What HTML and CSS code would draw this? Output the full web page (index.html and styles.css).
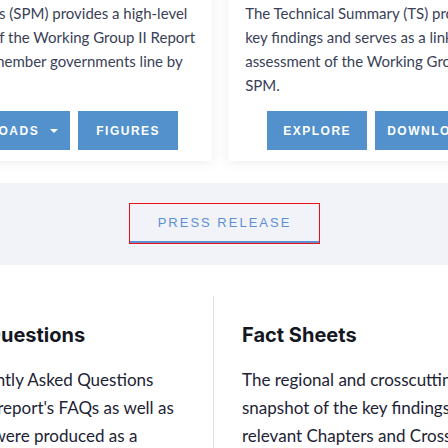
FILE: index.html
```html
<!DOCTYPE html>
<html lang="en">
<head>
<meta charset="utf-8">
<title>Working Group II Report</title>
<link rel="stylesheet" href="styles.css">
</head>
<body>
<section class="top">
  <div class="cards">
    <div class="card card-left">
      <p class="card-text">The Summary for Policymakers (SPM) provides a high-level<br>summary of the key findings of the Working Group II Report<br>and is approved by the IPCC member governments line by<br>line.</p>
      <div class="actions actions-end">
        <a class="btn" href="#">Downloads<span class="caret"></span></a>
        <a class="btn" href="#">Figures</a>
      </div>
    </div>
    <div class="card card-right">
      <p class="card-text">The Technical Summary (TS) provides a more elaborate synthesis of<br>key findings and serves as a link between the comprehensive<br>assessment of the Working Group II Report and the<br>SPM.</p>
      <div class="actions actions-start">
        <a class="btn" href="#">Explore</a>
        <a class="btn" href="#">Downloads</a>
      </div>
    </div>
  </div>
</section>
<section class="band">
  <a class="tab" href="#">Press Release</a>
</section>
<section class="bottom">
  <div class="col col-left">
    <h2 class="col-title">Frequently Asked Questions</h2>
    <p class="col-text">Here you will find Frequently Asked Questions<br>which span the WGII full report's FAQs as well as<br>and additional ones that were produced as a<br>part of the outreach.</p>
  </div>
  <div class="col col-right">
    <h2 class="col-title">Fact Sheets</h2>
    <p class="col-text">The regional and crosscutting fact sheets provide a<br>snapshot of the key findings, distilled from the<br>relevant Chapters and Cross-Chapter Papers.</p>
  </div>
</section>
</body>
</html>
```
FILE: styles.css
```css
html, body {
  margin: 0;
  padding: 0;
  background: #ffffff;
  overflow: hidden;
}

body {
  width: 448px;
  height: 448px;
  font-family: Lato, "Noto Sans", sans-serif;
}

.top {
  height: 183px;
  overflow: hidden;
  background: #ffffff;
}

.cards {
  display: flex;
  gap: 16px;
  margin-top: -16px;
  margin-left: -214px;
}

.card {
  flex: 0 0 419px;
  box-sizing: border-box;
  background: #ffffff;
  padding: 17px 17px 11px;
  box-shadow: 0 2px 12px rgba(0, 0, 0, 0.07);
}

.card-text {
  margin: 0;
  font-size: 15px;
  line-height: 24px;
  color: #3a4157;
  white-space: nowrap;
}

.actions {
  display: flex;
  gap: 8px;
  margin-top: 14px;
}

.actions-end {
  justify-content: flex-end;
  padding-right: 17px;
}

.actions-start {
  padding-left: 22px;
}

.btn {
  display: flex;
  align-items: center;
  justify-content: center;
  box-sizing: border-box;
  min-width: 100px;
  height: 39px;
  padding: 0 12px;
  background: #5291cc;
  color: #ffffff;
  text-decoration: none;
  text-transform: uppercase;
  font-family: "Liberation Sans", Arial, sans-serif;
  font-weight: 700;
  font-size: 12px;
  letter-spacing: 1.5px;
  white-space: nowrap;
}

.caret {
  display: inline-block;
  margin-left: 11px;
  width: 0;
  height: 0;
  border-left: 4px solid transparent;
  border-right: 4px solid transparent;
  border-top: 4px solid #ffffff;
}

.band {
  height: 82px;
  background: #f2f3f9;
  display: flex;
  justify-content: center;
  align-items: flex-start;
  padding-top: 21px;
  box-sizing: border-box;
}

.tab {
  display: flex;
  align-items: center;
  justify-content: center;
  box-sizing: border-box;
  width: 189px;
  height: 39px;
  margin-left: 1px;
  border-bottom: 2px solid #5a8fd4;
  outline: 1px solid #ee1111;
  color: #5d8fd5;
  text-decoration: none;
  text-transform: uppercase;
  font-family: "Liberation Sans", Arial, sans-serif;
  font-size: 13px;
  letter-spacing: 2px;
}

.bottom {
  display: flex;
  margin-top: 31px;
  margin-left: -191px;
}

.col {
  box-sizing: border-box;
  padding-top: 25px;
}

.col-left {
  flex: 0 0 405px;
  border-right: 1px solid #e2e2e2;
  padding-right: 28px;
}

.col-right {
  flex: 1 0 auto;
  padding-left: 28px;
}

.col-title {
  margin: 0 0 17px;
  font-family: Inter, "Noto Sans", sans-serif;
  font-size: 20px;
  line-height: 28px;
  font-weight: 700;
  color: #15171f;
  white-space: nowrap;
}

.col-text {
  margin: 0;
  font-size: 17px;
  line-height: 28px;
  color: #1d2335;
  white-space: nowrap;
}
```
